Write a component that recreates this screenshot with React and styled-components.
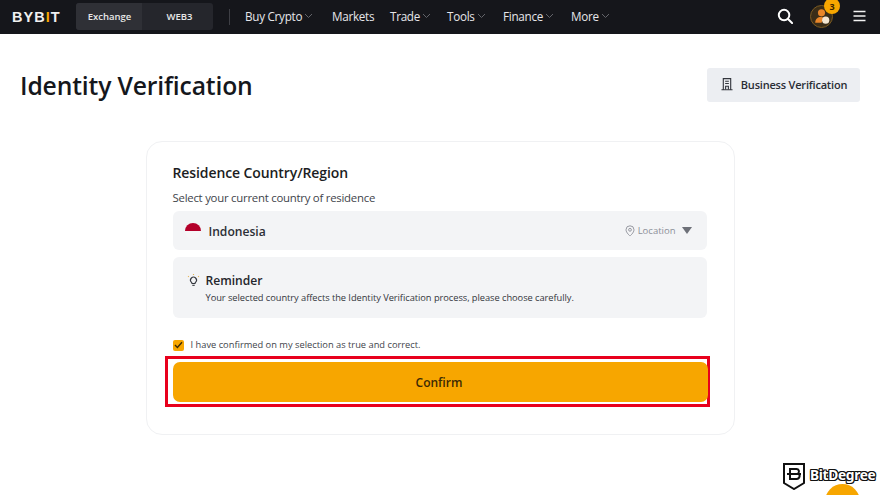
import React from "react";
import styled, { createGlobalStyle } from "styled-components";

const Global = createGlobalStyle`
  html, body { margin: 0; padding: 0; background: #fff; }
  body { font-family: "Open Sans", "Noto Sans", sans-serif; width: 880px; height: 495px; overflow: hidden; position: relative; }
  * { box-sizing: border-box; }
`;

const Header = styled.header`
  height: 34px; background: #15161b; display: flex; align-items: center; padding: 0 14px 3px 12px; color: #fff;
`;
const Logo = styled.div`
  font-family: "Liberation Sans", sans-serif; font-weight: 700; font-size: 14.5px; letter-spacing: 1px; color: #f0f0f0; width: 64px; position: relative; top: 1px;
  span { color: #f7a600; }
`;
const Switch = styled.div`
  display: flex; width: 137px; height: 27px; background: #25262c; border-radius: 3px; overflow: hidden; position: relative; top: 1px;
`;
const SwitchItem = styled.div`
  width: ${p => p.$active ? 66 : 71}px; display: flex; align-items: center; justify-content: center; font-size: 9.5px; font-weight: 600; color: #e8e8e8;
  background: ${p => p.$active ? "#2f3036" : "transparent"};
  padding-left: ${p => p.$active ? 1 : 4}px;
`;
const Divider = styled.div`
  width: 1px; height: 16px; background: #3e3f45; margin: 2px 15px 0 16px;
`;
const Nav = styled.nav`
  display: flex; align-items: center; flex: 1;
`;
const NavItem = styled.div`
  display: flex; align-items: center; font-size: 11.7px; color: #e6e6ea; width: ${p => p.$w}px; letter-spacing: -0.28px; white-space: nowrap;
  svg { margin-left: 2px; }
`;
const Tools = styled.div`
  display: flex; align-items: center;
`;
const Avatar = styled.div`
  position: relative; width: 23px; height: 23px; border-radius: 50%; background: #3a2d18; border: 1px solid #7a5a22; margin: 2px 0 0 17px;
`;
const Badge = styled.div`
  position: absolute; top: -8px; right: -8px; width: 16px; height: 16px; border-radius: 50%; background: #f7a600; color: #3a2500; font-size: 9px; font-weight: 700; display: flex; align-items: center; justify-content: center;
`;
const TitleRow = styled.div`
  display: flex; justify-content: space-between; align-items: center; padding: 0 20px; height: 102px;
`;
const Title = styled.h1`
  margin: 0; font-size: 24.7px; font-weight: 600; color: #15171c; letter-spacing: -0.15px;
`;
const BizButton = styled.button`
  width: 153px; height: 34px; border: 0; border-radius: 3px; background: #eceef2; display: flex; align-items: center; justify-content: center; gap: 8px; font: 600 11px "Open Sans", sans-serif; color: #2a2d35; letter-spacing: -0.2px; padding: 0 1px 2px 2px;
`;
const Card = styled.section`
  width: 589px; height: 294px; margin: 5px auto 0; border: 1px solid #f0f1f3; border-radius: 16px; padding: 21px 27px 0 26px; display: flex; flex-direction: column;
`;
const CardTitle = styled.h2`
  margin: 0; font-size: 14px; font-weight: 600; line-height: 20px; color: #1b1d22; letter-spacing: -0.1px;
`;
const Hint = styled.div`
  font-size: 11.4px; line-height: 16px; margin-top: 7px; color: #41444b; letter-spacing: -0.25px;
`;
const Select = styled.div`
  height: 39px; margin-top: 5px; background: #f3f4f6; border-radius: 6px; display: flex; align-items: center; padding: 0 15px 0 12px;
`;
const Flag = styled.div`
  width: 16px; height: 16px; border-radius: 50%; overflow: hidden; background: linear-gradient(#b4002a 50%, #f6f6f7 50%); margin: 0 8px 0 0;
`;
const CountryName = styled.div`
  flex: 1; font-size: 12.1px; font-weight: 600; color: #2b2e35; padding-top: 1px;
`;
const LocationTag = styled.div`
  display: flex; align-items: center; gap: 3px; font-size: 9.5px; color: #8d9099; margin-right: 6px;
`;
const Caret = styled.div`
  width: 0; height: 0; border-left: 5px solid transparent; border-right: 5px solid transparent; border-top: 7px solid #6d7078;
`;
const Reminder = styled.div`
  height: 61px; margin-top: 7px; background: #f3f4f6; border-radius: 6px; padding: 15px 13px 0 14px;
`;
const ReminderHead = styled.div`
  display: flex; align-items: center; gap: 6px; font-size: 12.1px; font-weight: 600; color: #24262c; line-height: 18px;
`;
const ReminderText = styled.div`
  font-size: 9.3px; line-height: 14px; color: #33363d; margin: 1px 0 0 19px; letter-spacing: -0.05px;
`;
const CheckRow = styled.div`
  display: flex; align-items: center; gap: 7px; margin-top: 21px; font-size: 9.3px; line-height: 12px; color: #41444b; height: 12px;
`;
const Check = styled.div`
  width: 11px; height: 11px; border-radius: 2px; background: #f7a600; display: flex; align-items: center; justify-content: center;
`;
const Highlight = styled.div`
  margin: 5px 0 0 -8px; width: 545px; height: 51px; border: 3px solid #e8001c; padding: 3px 0 2px 5px;
`;
const ConfirmButton = styled.button`
  width: 535px; height: 40px; border: 0; border-radius: 7px; background: #f7a600; color: #3c2a05; font: 600 12px "Open Sans", sans-serif; display: block; padding: 0 2px 0 0;
`;
const Watermark = styled.div`
  position: absolute; left: 783px; top: 463px; display: flex; align-items: center; gap: 5px;
`;
const WatermarkText = styled.span`
  font: 700 13.7px "Noto Sans", sans-serif; color: #fff; letter-spacing: -0.3px; position: relative; top: -2px;
  text-shadow: 1px 0 0 #111, -1px 0 0 #111, 0 1px 0 #111, 0 -1px 0 #111, 1px 1px 0 #111, -1px -1px 0 #111, 1px -1px 0 #111, -1px 1px 0 #111;
`;
const OrangeDot = styled.div`
  position: absolute; left: 825px; top: 484px; width: 35px; height: 35px; border-radius: 50%; background: #f7a600;
`;

const Chevron = () => (
  <svg width="9" height="6" viewBox="0 0 9 6" fill="none" stroke="#63646a" strokeWidth="1"><path d="M1 1l3.5 3.5L8 1" /></svg>
);

const nav = [
  ["Buy Crypto", true, 87],
  ["Markets", false, 58],
  ["Trade", true, 57],
  ["Tools", true, 56],
  ["Finance", true, 68],
  ["More", true, 50],
];

export default function App() {
  return (
    <>
      <Global />
      <Header>
        <Logo>BYB<span>I</span>T</Logo>
        <Switch>
          <SwitchItem $active>Exchange</SwitchItem>
          <SwitchItem>WEB3</SwitchItem>
        </Switch>
        <Divider />
        <Nav>
          {nav.map(([label, chev, w]) => (
            <NavItem key={label} $w={w}>{label}{chev && <Chevron />}</NavItem>
          ))}
        </Nav>
        <Tools>
          <svg width="16" height="16" viewBox="0 0 17 17" fill="none" stroke="#fff" strokeWidth="2.1">
            <circle cx="7.5" cy="7.5" r="5.6" />
            <path d="M11.7 11.7L16 16" strokeLinecap="round" />
          </svg>
          <Avatar>
            <svg width="21" height="21" viewBox="0 0 20 20">
              <circle cx="10" cy="6.5" r="3.4" fill="#e8862a" />
              <path d="M4 16c0-3.800 2.500-5.500 5.500-5.500 1 0 2 .2 2.600.7L10 16z" fill="#e8862a" />
              <circle cx="14" cy="13.5" r="3.4" fill="#f3e6d2" />
            </svg>
            <Badge>3</Badge>
          </Avatar>
          <svg width="13" height="12" viewBox="0 0 13 12" fill="none" stroke="#f2f2f2" strokeWidth="1.6" style={{ marginLeft: 20 }}>
            <path d="M0.5 1.5h12M0.5 6h12M0.5 10.5h12" />
          </svg>
        </Tools>
      </Header>
      <TitleRow>
        <Title>Identity Verification</Title>
        <BizButton>
          <svg width="12" height="14" viewBox="0 0 13 14" fill="none" stroke="#33363d" strokeWidth="1.2">
            <path d="M2.5 13V1.2h8V13M0.5 13.2h12" />
            <path d="M4.5 4h4M4.5 6.5h4" />
            <path d="M5 13V9.5h3V13" />
          </svg>
          Business Verification
        </BizButton>
      </TitleRow>
      <Card>
        <CardTitle>Residence Country/Region</CardTitle>
        <Hint>Select your current country of residence</Hint>
        <Select>
          <Flag />
          <CountryName>Indonesia</CountryName>
          <LocationTag>
            <svg width="10" height="12" viewBox="0 0 10 12" fill="none" stroke="#8d9099" strokeWidth="0.9">
              <path d="M5 11S1 7.6 1 4.8a4 4 0 0 1 8 0C9 7.6 5 11 5 11z" />
              <circle cx="5" cy="4.8" r="1.4" />
            </svg>
            Location
          </LocationTag>
          <Caret />
        </Select>
        <Reminder>
          <ReminderHead>
            <svg width="13" height="14" viewBox="0 0 13 14" fill="none" stroke="#33363d" strokeWidth="1.1">
              <path d="M4.3 8.2a3 3 0 1 1 4.4 0c-.5.5-.7 1-.7 1.3H5c0-.3-.2-.8-.7-1.3z" />
              <path d="M5.3 11.3h2.4" />
              <path d="M1 2.2l.9.7M12 2.2l-.9.7M6.5 0v1" stroke="#e4b455" />
            </svg>
            Reminder
          </ReminderHead>
          <ReminderText>Your selected country affects the Identity Verification process, please choose carefully.</ReminderText>
        </Reminder>
        <CheckRow>
          <Check>
            <svg width="9" height="8" viewBox="0 0 9 8" fill="none" stroke="#3c2a05" strokeWidth="1.4"><path d="M1 4l2.4 2.4L8 1.2" /></svg>
          </Check>
          I have confirmed on my selection as true and correct.
        </CheckRow>
        <Highlight>
          <ConfirmButton>Confirm</ConfirmButton>
        </Highlight>
      </Card>
      <Watermark>
        <svg width="22" height="27" viewBox="0 0 22 27">
          <path d="M1 1h20v19l-10 6-10-6z" fill="#fff" stroke="#111" strokeWidth="2" />
          <path d="M7 6h6.5a2.5 2.5 0 0 1 1.6 4.4A3 3 0 0 1 13.5 16H7zM4 11h14" fill="none" stroke="#111" strokeWidth="2" />
        </svg>
        <WatermarkText>BitDegree</WatermarkText>
      </Watermark>
      <OrangeDot />
    </>
  );
}
